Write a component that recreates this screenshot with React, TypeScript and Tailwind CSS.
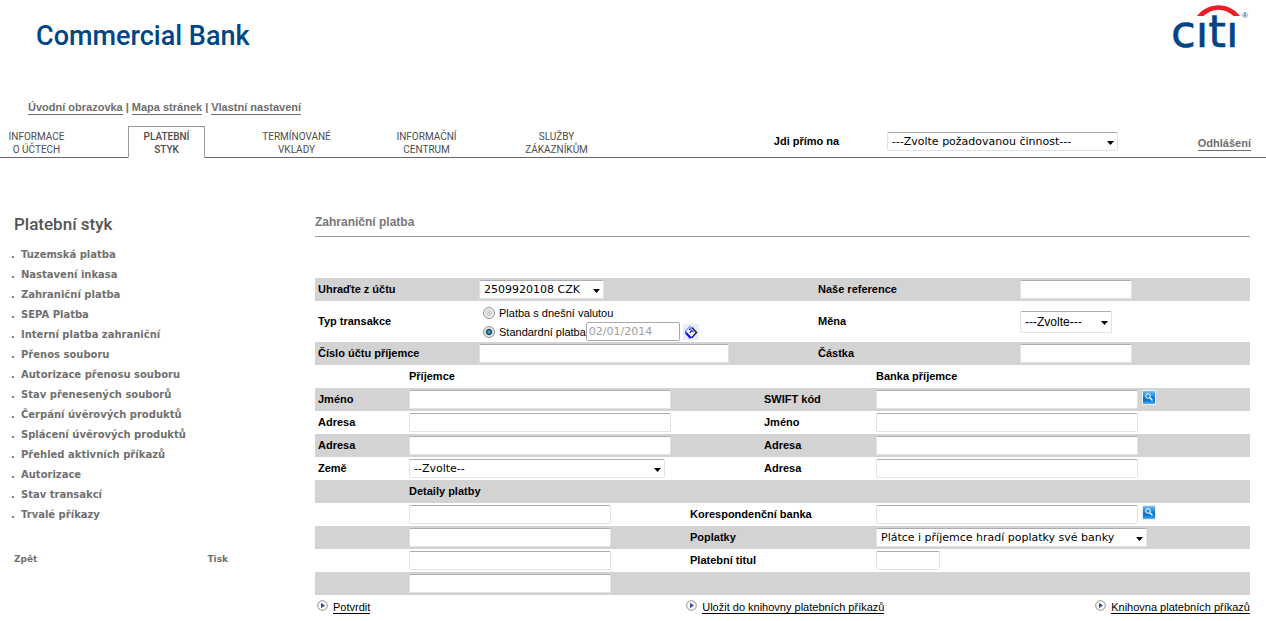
import type { ReactNode } from "react";

const tabs = [
  { lines: ["INFORMACE", "O ÚČTECH"], active: false },
  { lines: ["PLATEBNÍ", "STYK"], active: true },
  { lines: ["TERMÍNOVANÉ", "VKLADY"], active: false },
  { lines: ["INFORMAČNÍ", "CENTRUM"], active: false },
  { lines: ["SLUŽBY", "ZÁKAZNÍKŮM"], active: false },
];

const menu = [
  "Tuzemská platba",
  "Nastavení inkasa",
  "Zahraniční platba",
  "SEPA Platba",
  "Interní platba zahraniční",
  "Přenos souboru",
  "Autorizace přenosu souboru",
  "Stav přenesených souborů",
  "Čerpání úvěrových produktů",
  "Splácení úvěrových produktů",
  "Přehled aktivních příkazů",
  "Autorizace",
  "Stav transakcí",
  "Trvalé příkazy",
];

const fieldBorder = "rounded-[2px] border border-[#e0e2ea] border-t-[#abadb3] bg-white";

const CitiLogo = () => (
  <svg width="79" height="64" viewBox="0 0 79 64" role="img" aria-label="citi">
    <text
      x="-1"
      y="47"
      fontFamily="'DejaVu Sans', sans-serif"
      fontSize="45"
      fill="#004685"
      stroke="#004685"
      strokeWidth="0.600"
    >
      cıtı
    </text>
    <path d="M25 16C36 1.500 57 1.500 68 16L61.500 16C52 7.500 41 7.500 31.500 16Z" fill="#ee1c25" />
    <text x="70" y="18" fontFamily="'Liberation Sans', sans-serif" fontSize="8" fill="#004685">
      ®
    </text>
  </svg>
);

const ArrowBullet = () => (
  <svg width="11" height="11" viewBox="0 0 11 11" aria-hidden="true">
    <circle cx="5.500" cy="5.500" r="4.800" fill="#fff" stroke="#8c8c8c" />
    <path d="M4 2.800L8 5.500L4 8.200Z" fill="#3b4aa8" />
  </svg>
);

const SearchButton = ({ label }: { label: string }) => (
  <button type="button" aria-label={label} className="h-[15px] w-[14px] self-start">
    <svg width="14" height="15" viewBox="0 0 14 15">
      <defs>
        <linearGradient id="lens" x1="0" y1="0" x2="0" y2="1">
          <stop offset="0" stopColor="#7cc0ee" />
          <stop offset="0.400" stopColor="#1f85d8" />
          <stop offset="0.700" stopColor="#0070d0" />
          <stop offset="1" stopColor="#55b4f2" />
        </linearGradient>
      </defs>
      <rect width="14" height="15" fill="#e4f0fa" />
      <rect x="1" y="1" width="12" height="13" fill="url(#lens)" />
      <circle cx="6" cy="6" r="2.300" fill="none" stroke="#fff" />
      <path d="M7.800 7.800L10.500 10.500" stroke="#fff" strokeWidth="1.500" />
    </svg>
  </button>
);

const CalendarButton = () => (
  <button type="button" aria-label="Kalendář" className="h-4 w-4 bg-[#ececff]">
    <svg width="16" height="16" viewBox="0 0 16 16">
      <path d="M7 2.500L12.500 8L8 12.500L2.500 7Z" fill="#fff" />
      <path d="M2.500 7L7 2.500L9 4.500" fill="none" stroke="#5fb8ee" strokeWidth="1.300" />
      <path d="M2 6.500L8.500 13L7 15L2.500 10Z" fill="#1111ee" />
      <path d="M9 3.500L13.500 8.500L8.500 14" fill="none" stroke="#222244" strokeWidth="1.500" />
      <path d="M6 6L8 4.500M7 9L8.500 6.500L10.500 8" fill="none" stroke="#2222dd" strokeWidth="1.300" />
    </svg>
  </button>
);

const TextField = ({ label, className }: { label: string; className: string }) => (
  <input type="text" aria-label={label} className={`${fieldBorder} h-[19px] px-1 text-[11px] ${className}`} />
);

const Dropdown = ({
  label,
  value,
  className,
  textClass = "font-['DejaVu_Sans',sans-serif] text-[11px]",
}: {
  label: string;
  value: string;
  className: string;
  textClass?: string;
}) => (
  <div className={`relative ${className}`}>
    <select
      aria-label={label}
      className={`${fieldBorder} block size-full appearance-none pt-px pl-1 leading-4 text-black ${textClass}`}
    >
      <option>{value}</option>
    </select>
    <svg
      width="7"
      height="4"
      viewBox="0 0 7 4"
      className="pointer-events-none absolute top-1/2 right-1 -translate-y-px"
      aria-hidden="true"
    >
      <path d="M0 0H7L3.500 4Z" fill="#000" />
    </svg>
  </div>
);

const AccountRow = ({ shaded, children }: { shaded?: boolean; children: ReactNode }) => (
  <div
    className={`grid min-h-[23px] grid-cols-[164fr_339fr_202fr_230fr] items-center [&>b]:pb-0.5 ${shaded ? "bg-[#d3d3d3]" : ""}`}
  >
    {children}
  </div>
);

const PartyRow = ({ shaded, children }: { shaded?: boolean; children: ReactNode }) => (
  <div
    className={`grid h-[23px] grid-cols-[94fr_355fr_112fr_374fr] items-center [&>b]:pb-0.5 ${shaded ? "bg-[#d3d3d3]" : ""}`}
  >
    {children}
  </div>
);

const DetailRow = ({ shaded, children }: { shaded?: boolean; children?: ReactNode }) => (
  <div
    className={`grid h-[23px] grid-cols-[94fr_281fr_186fr_374fr] items-center [&>b]:pb-0.5 ${shaded ? "bg-[#d3d3d3]" : ""}`}
  >
    <span />
    {children}
  </div>
);

const FormLink = ({ children }: { children: ReactNode }) => (
  <a href="#" className="flex items-start gap-[5px] text-[11px] leading-3">
    <ArrowBullet />
    <span className="mt-px border-b border-black">{children}</span>
  </a>
);

const radioClass =
  "size-3 shrink-0 appearance-none rounded-full border border-[#8e8f8f] bg-[radial-gradient(circle,#d0d3d8_35%,#f4f4f4_65%)] checked:bg-[radial-gradient(circle,#4fa8d8_8%,#12405f_38%,#e8e8e8_52%)]";

const Header = () => (
  <header>
    <div className="flex h-[101px] items-start justify-between pr-[15px] pl-9">
      <h1 className="pt-5 font-[Roboto,sans-serif] text-[27px] leading-8 font-medium text-[#004685]">
        Commercial Bank
      </h1>
      <CitiLogo />
    </div>

    <nav className="flex gap-[3px] pl-7 text-[11px] leading-[13px] font-bold text-[#6e6e6e]">
      <a href="#" className="border-b border-[#6e6e6e]">Úvodní obrazovka</a>
      <span>|</span>
      <a href="#" className="border-b border-[#6e6e6e]">Mapa stránek</a>
      <span>|</span>
      <a href="#" className="border-b border-[#6e6e6e]">Vlastní nastavení</a>
    </nav>

    <div className="mt-[11px] flex h-8 border-b border-[#666] pr-[15px]">
      <nav className="-ml-0.5 flex gap-[53px] font-[Roboto,sans-serif] text-[10px] leading-[13px] text-[#4d4d4d]">
        {tabs.map((tab) => (
          <a
            key={tab.lines[0]}
            href="#"
            className={`flex h-8 w-[77px] flex-col items-center border pt-[3px] ${
              tab.active ? "border-[#999] border-b-white bg-white font-medium" : "border-transparent"
            }`}
          >
            {tab.lines.map((line) => (
              <span key={line}>{line}</span>
            ))}
          </a>
        ))}
      </nav>
      <div className="ml-auto flex items-center">
        <span className="w-[113px] text-[11px] font-bold">Jdi přímo na</span>
        <Dropdown label="Jdi přímo na" value="---Zvolte požadovanou činnost---" className="h-[19px] w-[231px]" />
        <a href="#" className="mt-1 ml-20 border-b border-[#6e6e6e] text-[11px] leading-[13px] font-bold text-[#6e6e6e]">
          Odhlášení
        </a>
      </div>
    </div>
  </header>
);

const Sidebar = () => (
  <aside className="w-[315px] shrink-0 pt-14 font-['DejaVu_Sans',sans-serif] font-bold text-[#707070]">
    <h2 className="pl-[14px] font-[Roboto,sans-serif] text-[17px] leading-5 font-medium text-[#555]">Platební styk</h2>
    <ul className="mt-[11px] pl-[11px] text-[10px] leading-5">
      {menu.map((item) => (
        <li key={item} className="flex">
          <span className="w-[10px]">.</span>
          <a href="#">{item}</a>
        </li>
      ))}
    </ul>
    <div className="mt-7 flex w-[228px] justify-between pl-[14px] text-[9px] leading-3">
      <a href="#">Zpět</a>
      <a href="#">Tisk</a>
    </div>
  </aside>
);

const PaymentForm = () => (
  <form className="mt-[41px] text-[11px] leading-[14px]">
    <AccountRow shaded>
      <b className="pl-[3px]">Uhraďte z účtu</b>
      <Dropdown label="Uhraďte z účtu" value="2509920108 CZK" className="h-[19px] w-[125px]" />
      <b>Naše reference</b>
      <TextField label="Naše reference" className="w-28" />
    </AccountRow>
    <AccountRow>
      <b className="pl-[3px]">Typ transakce</b>
      <div className="h-[41px] pl-1">
        <label className="flex h-5 items-center gap-1 pt-1">
          <input type="radio" name="typ" className={radioClass} />
          Platba s dnešní valutou
        </label>
        <div className="flex h-[21px] items-center">
          <label className="flex items-center gap-1">
            <input type="radio" name="typ" defaultChecked className={radioClass} />
            Standardní platba
          </label>
          <input
            type="text"
            aria-label="Datum platby"
            defaultValue="02/01/2014"
            disabled
            className="h-[19px] w-[94px] rounded-[2px] border border-[#a9a9a9] bg-white px-0.5 font-['DejaVu_Sans',sans-serif] text-[11px] text-[#a0a0a0]"
          />
          <span className="ml-[3px] flex">
            <CalendarButton />
          </span>
        </div>
      </div>
      <b>Měna</b>
      <Dropdown label="Měna" value="---Zvolte---" className="h-[22px] w-[92px]" textClass="text-xs" />
    </AccountRow>
    <AccountRow shaded>
      <b className="pl-[3px]">Číslo účtu příjemce</b>
      <TextField label="Číslo účtu příjemce" className="w-[250px]" />
      <b>Částka</b>
      <TextField label="Částka" className="w-28" />
    </AccountRow>

    <PartyRow>
      <span />
      <b>Příjemce</b>
      <span />
      <b>Banka příjemce</b>
    </PartyRow>
    <PartyRow shaded>
      <b className="pl-[3px]">Jméno</b>
      <TextField label="Jméno příjemce" className="w-[262px]" />
      <b>SWIFT kód</b>
      <div className="flex gap-1">
        <TextField label="SWIFT kód" className="w-[262px]" />
        <SearchButton label="Hledat SWIFT kód" />
      </div>
    </PartyRow>
    <PartyRow>
      <b className="pl-[3px]">Adresa</b>
      <TextField label="Adresa příjemce" className="w-[262px]" />
      <b>Jméno</b>
      <TextField label="Jméno banky" className="w-[262px]" />
    </PartyRow>
    <PartyRow shaded>
      <b className="pl-[3px]">Adresa</b>
      <TextField label="Adresa příjemce, druhý řádek" className="w-[262px]" />
      <b>Adresa</b>
      <TextField label="Adresa banky" className="w-[262px]" />
    </PartyRow>
    <PartyRow>
      <b className="pl-[3px]">Země</b>
      <Dropdown label="Země" value="--Zvolte--" className="h-[19px] w-[256px]" />
      <b>Adresa</b>
      <TextField label="Adresa banky, druhý řádek" className="w-[262px]" />
    </PartyRow>

    <DetailRow shaded>
      <b>Detaily platby</b>
    </DetailRow>
    <DetailRow>
      <TextField label="Detaily platby 1" className="w-[202px]" />
      <b>Korespondenční banka</b>
      <div className="flex gap-1">
        <TextField label="Korespondenční banka" className="w-[262px]" />
        <SearchButton label="Hledat korespondenční banku" />
      </div>
    </DetailRow>
    <DetailRow shaded>
      <TextField label="Detaily platby 2" className="w-[202px]" />
      <b>Poplatky</b>
      <Dropdown label="Poplatky" value="Plátce i příjemce hradí poplatky své banky" className="h-[19px] w-[271px]" />
    </DetailRow>
    <DetailRow>
      <TextField label="Detaily platby 3" className="w-[202px]" />
      <b>Platební titul</b>
      <TextField label="Platební titul" className="w-16" />
    </DetailRow>
    <DetailRow shaded>
      <TextField label="Detaily platby 4" className="w-[202px]" />
    </DetailRow>

    <div className="grid grid-cols-[370fr_565fr] pt-[5px] pl-0.5">
      <FormLink>Potvrdit</FormLink>
      <div className="flex justify-between">
        <FormLink>Uložit do knihovny platebních příkazů</FormLink>
        <FormLink>Knihovna platebních příkazů</FormLink>
      </div>
    </div>
  </form>
);

export default function App() {
  return (
    <div className="bg-white font-['Liberation_Sans',Arial,sans-serif] text-black">
      <Header />
      <div className="flex">
        <Sidebar />
        <main className="mr-4 flex-1 pt-[57px]">
          <h2 className="border-b border-[#999] pb-[7px] text-xs leading-[14px] font-bold text-[#777]">
            Zahraniční platba
          </h2>
          <PaymentForm />
        </main>
      </div>
    </div>
  );
}
